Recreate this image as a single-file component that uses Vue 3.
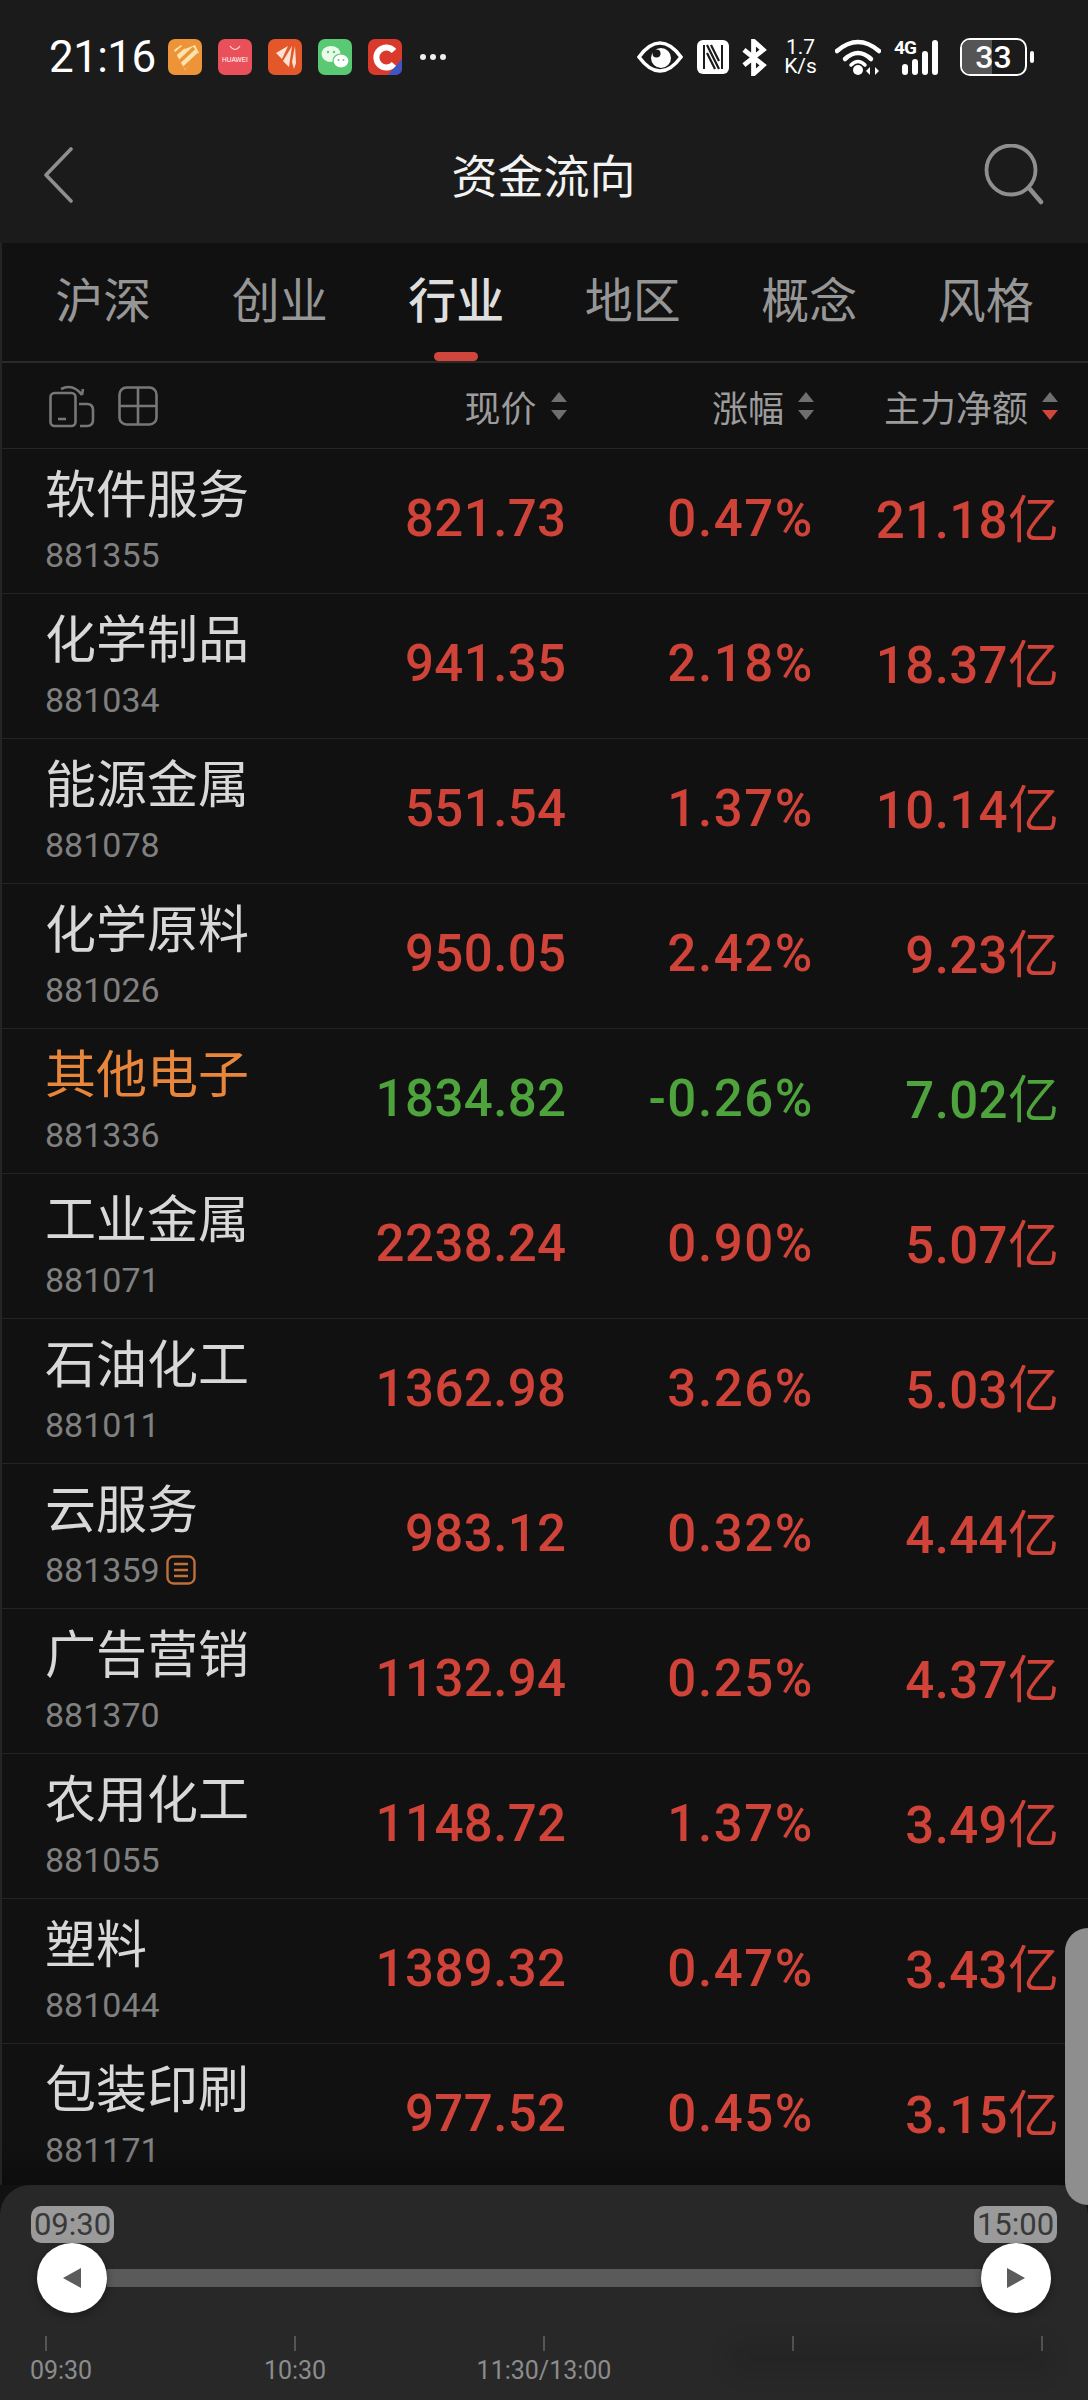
<script setup>
const tabs = ['沪深', '创业', '行业', '地区', '概念', '风格']
const rows = [
  { name: '软件服务', code: '881355', price: '821.73', pct: '0.47%', amt: '21.18' },
  { name: '化学制品', code: '881034', price: '941.35', pct: '2.18%', amt: '18.37' },
  { name: '能源金属', code: '881078', price: '551.54', pct: '1.37%', amt: '10.14' },
  { name: '化学原料', code: '881026', price: '950.05', pct: '2.42%', amt: '9.23' },
  { name: '其他电子', code: '881336', price: '1834.82', pct: '-0.26%', amt: '7.02', hot: true, down: true },
  { name: '工业金属', code: '881071', price: '2238.24', pct: '0.90%', amt: '5.07' },
  { name: '石油化工', code: '881011', price: '1362.98', pct: '3.26%', amt: '5.03' },
  { name: '云服务', code: '881359', price: '983.12', pct: '0.32%', amt: '4.44', note: true },
  { name: '广告营销', code: '881370', price: '1132.94', pct: '0.25%', amt: '4.37' },
  { name: '农用化工', code: '881055', price: '1148.72', pct: '1.37%', amt: '3.49' },
  { name: '塑料', code: '881044', price: '1389.32', pct: '0.47%', amt: '3.43' },
  { name: '包装印刷', code: '881171', price: '977.52', pct: '0.45%', amt: '3.15' }
]
const axis = ['09:30', '10:30', '11:30/13:00', '', '']
</script>

<template>
  <div class="app">
    <header class="top">
      <div class="status">
        <span class="time">21:16</span>
        <div class="apps">
          <svg class="app-icon" viewBox="0 0 34 36"><rect width="34" height="36" rx="7" fill="#ee9438"/><path d="M6 11 L13 6 L17 10 L27 6 L31 14 L17 31 Z" fill="#fbe7b0" opacity=".95"/><path d="M4 18 L20 4 M10 24 L26 9 M16 29 L31 15" stroke="#ee9438" stroke-width="3.5"/></svg>
          <svg class="app-icon" viewBox="0 0 34 36"><rect width="34" height="36" rx="7" fill="#e9505a"/><path d="M12 7 Q17 14 22 7" fill="none" stroke="#fbd5d5" stroke-width="1.2"/><text x="17" y="23" text-anchor="middle" class="hw">HUAWEI</text></svg>
          <svg class="app-icon" viewBox="0 0 34 36"><rect width="34" height="36" rx="7" fill="#e4572a"/><path d="M8 14 L20 7 L14 20 Z M15 22 L24 7 L21 28 Z M24 23 L27 7 L28 24 L26 30 Z" fill="#fbe3d3"/></svg>
          <svg class="app-icon" viewBox="0 0 34 36"><rect width="34" height="36" rx="7" fill="#59c973"/><ellipse cx="13" cy="15" rx="9.5" ry="8" fill="#eafbe9"/><ellipse cx="23" cy="22" rx="8" ry="7" fill="#fff" stroke="#59c973" stroke-width="1.2"/><circle cx="10" cy="13" r="1.2" fill="#59c973"/><circle cx="16" cy="13" r="1.2" fill="#59c973"/><circle cx="20.500" cy="21" r="1" fill="#59c973"/><circle cx="25.500" cy="21" r="1" fill="#59c973"/></svg>
          <svg class="app-icon" viewBox="0 0 34 36"><rect width="34" height="36" rx="7" fill="#d93a2b"/><path d="M26 12 A10 10 0 1 0 26 25" fill="none" stroke="#fff" stroke-width="6"/><path d="M34 20 V29 Q34 36 27 36 H20 Z" fill="#3f55c4"/></svg>
        </div>
        <span class="dots"><i></i><i></i><i></i></span>
        <div class="sys">
          <svg class="s-eye" viewBox="0 0 46 32"><path d="M2 16C10 5 18 2 23 2s13 3 21 14C36 27 28 30 23 30S10 27 2 16Z" fill="none" stroke="#fff" stroke-width="3.600"/><circle cx="24" cy="17" r="10" fill="#fff"/><circle cx="19.500" cy="12.500" r="4" fill="#1b1b1b"/></svg>
          <svg class="s-nfc" viewBox="0 0 32 34"><rect width="32" height="34" rx="6" fill="#fff"/><path d="M7 5 V29 M25 5 V29" stroke="#1b1b1b" stroke-width="2"/><path d="M10 5 L22 29 M10 13 L18 29 M14 5 L22 21" stroke="#1b1b1b" stroke-width="2.200"/></svg>
          <svg class="s-bt" viewBox="0 0 26 38"><path d="M2 11 L22 27 L12 36 V2 L22 11 L2 27" fill="none" stroke="#fff" stroke-width="5"/></svg>
          <div class="speed"><span>1.7</span><span>K/s</span></div>
          <svg class="s-wifi" viewBox="0 0 46 38"><path d="M2 13 Q23 -5 44 13" fill="none" stroke="#fff" stroke-width="4.500" stroke-linecap="round"/><path d="M10 21 Q23 9 36 21" fill="none" stroke="#fff" stroke-width="4.500" stroke-linecap="round"/><path d="M16 27 Q23 20 30 27" fill="none" stroke="#fff" stroke-width="3.500" stroke-linecap="round"/><circle cx="23" cy="32" r="5" fill="#fff"/><path d="M35 29 V37 L31 33 Z M40 29 V37 L44 33 Z" fill="#fff"/></svg>
          <div class="signal">
            <span class="g4">4G</span>
            <i class="b1"></i><i class="b2"></i><i class="b3"></i><i class="b4"></i>
          </div>
          <div class="battery"><div class="bat-body"><div class="bat-fill"></div><span>33</span></div><i class="bat-tip"></i></div>
        </div>
      </div>
      <div class="nav">
        <svg class="back" viewBox="0 0 30 56"><path d="M28 2 L3 28 L28 54" fill="none" stroke="#8f8f8f" stroke-width="3.600" stroke-linecap="round" stroke-linejoin="round"/></svg>
        <h1 class="title">资金流向</h1>
        <svg class="search" viewBox="0 0 60 62"><circle cx="27" cy="26" r="24.500" fill="none" stroke="#8f8f8f" stroke-width="3.800"/><path d="M45 44 L57 58" stroke="#8f8f8f" stroke-width="4.500" stroke-linecap="round"/></svg>
      </div>
    </header>

    <main class="main">
      <nav class="tabs">
        <div v-for="t in tabs" :key="t" class="tab" :class="{ on: t === '行业' }">{{ t }}</div>
      </nav>
      <div class="thead grid">
        <div class="th-icons">
          <svg class="i-rot" viewBox="0 0 46 44"><rect x="1.500" y="9" width="25" height="33" rx="4" fill="none" stroke="#777" stroke-width="2.600"/><path d="M9 35 H17" stroke="#777" stroke-width="2.600"/><path d="M30 20 H38 Q44 20 44 26 V36 Q44 42 38 42 H31" fill="none" stroke="#777" stroke-width="2.600"/><path d="M12 5 Q24 -1 33 11 M33 11 L34 5" fill="none" stroke="#777" stroke-width="2.600"/></svg>
          <svg class="i-grid" viewBox="0 0 40 40"><rect x="1.500" y="1.500" width="37" height="37" rx="7" fill="none" stroke="#777" stroke-width="2.600"/><path d="M20 2 V38 M2 20 H38" stroke="#777" stroke-width="2.600"/></svg>
        </div>
        <div class="th">现价<span class="sort"><i class="up"></i><i class="dn"></i></span></div>
        <div class="th">涨幅<span class="sort"><i class="up"></i><i class="dn"></i></span></div>
        <div class="th last">主力净额<span class="sort"><i class="up"></i><i class="dn active"></i></span></div>
      </div>
      <div v-for="r in rows" :key="r.code" class="row grid" :class="{ down: r.down }">
        <div class="stock">
          <div class="name" :class="{ hot: r.hot }">{{ r.name }}</div>
          <div class="code">{{ r.code }}
            <svg v-if="r.note" class="note" viewBox="0 0 30 30"><rect x="1.500" y="1.500" width="27" height="27" rx="6" fill="none" stroke="#bf6f3a" stroke-width="2.400"/><path d="M8 9 H22 M8 15 H22 M8 21 H22" stroke="#bf6f3a" stroke-width="2.400"/></svg>
          </div>
        </div>
        <div class="val">{{ r.price }}</div>
        <div class="val pct">{{ r.pct }}</div>
        <div class="val amt">{{ r.amt }}<span class="yi">亿</span></div>
      </div>
      <div class="fade"></div>
    </main>

    <section class="panel">
      <div class="badges"><span class="badge">09:30</span><span class="badge">15:00</span></div>
      <div class="slider">
        <div class="knob"><svg class="tri" viewBox="0 0 18 20"><path d="M0 10 L18 0 V20 Z" fill="#5c5c5c"/></svg></div>
        <div class="track"></div>
        <div class="knob"><svg class="tri" viewBox="0 0 18 20"><path d="M18 10 L0 0 V20 Z" fill="#5c5c5c"/></svg></div>
      </div>
      <div class="axis">
        <div v-for="(a, i) in axis" :key="i" class="tick" :class="'t' + i">
          <i></i>
          <span>{{ a }}</span>
        </div>
      </div>
      <div class="smudge"></div>
    </section>

    <div class="handle"></div>
  </div>
</template>

<style scoped>
* { box-sizing: border-box; }
i { display: block; }
.app {
  position: relative;
  width: 1088px;
  height: 2400px;
  overflow: hidden;
  display: flex;
  flex-direction: column;
  background: #111;
  font-family: "Noto Sans CJK SC", "Noto Sans", sans-serif;
}
.top { background: #1b1b1b; height: 243px; flex: none; }
.status {
  height: 114px;
  display: flex;
  align-items: center;
  padding: 0 54px 0 49px;
  color: #fff;
}
.time {
  font: 400 44px/1 Roboto, sans-serif;
  letter-spacing: -.6px;
  width: 119px;
  flex: none;
}
.apps { display: flex; gap: 16px; }
.app-icon { width: 34px; height: 36px; display: block; }
.hw { font: 500 6.500px "Liberation Sans", sans-serif; fill: #fff; }
.dots { display: flex; gap: 4px; margin-left: 18px; }
.dots i { width: 6px; height: 6px; border-radius: 50%; background: #eee; }
.sys { margin-left: auto; display: flex; align-items: center; }
.s-eye { width: 46px; height: 32px; margin-right: 14px; }
.s-nfc { width: 32px; height: 34px; margin-right: 13px; }
.s-bt { width: 25px; height: 37px; margin-right: 16px; }
.speed {
  display: flex;
  flex-direction: column;
  align-items: center;
  width: 35px;
  font: 400 21px/19px Roboto, sans-serif;
  margin-right: 17px;
}
.s-wifi { width: 46px; height: 38px; margin-right: 13px; }
.signal { display: flex; align-items: flex-end; gap: 4px; position: relative; width: 51px; height: 36px; padding-left: 8px; margin-right: 15px; }
.signal i { width: 6px; background: #fff; border-radius: 3px; }
.b1 { height: 11px; }
.b2 { height: 16px; }
.b3 { height: 24px; }
.b4 { height: 35px; }
.g4 { position: absolute; left: 0; top: -1px; font: 700 19px/1 Roboto, sans-serif; letter-spacing: -1px; color: #fff; }
.battery { display: flex; align-items: center; gap: 3px; }
.bat-body {
  position: relative;
  width: 67px;
  height: 38px;
  border: 2.500px solid #fff;
  border-radius: 10px;
  display: flex;
  align-items: center;
  justify-content: center;
  overflow: hidden;
}
.bat-fill { position: absolute; left: 0; top: 0; bottom: 0; width: 30px; background: #555; }
.bat-body span { position: relative; font: 500 32px/1 Roboto, sans-serif; }
.bat-tip { width: 4px; height: 12px; border-radius: 2px; background: #fff; }
.nav {
  height: 122px;
  display: grid;
  grid-template-columns: 1fr auto 1fr;
  align-items: center;
  padding: 0 44px 0 43px;
}
.back { width: 30px; height: 56px; }
.search { width: 60px; height: 62px; justify-self: end; }
.title {
  margin: 0 0 5px;
  font-size: 46px;
  font-weight: 400;
  line-height: 1;
  color: #f2f2f2;
}
.main { position: relative; flex: 1; min-height: 0; overflow: hidden; border-left: 2px solid #242424; margin-top: 0; }
.tabs {
  display: flex;
  height: 120px;
  margin-left: -2px;
  padding: 0 14px 10px 15px;
  border-bottom: 2px solid #2a2a2a;
}
.tab {
  flex: 1;
  display: flex;
  align-items: center;
  justify-content: center;
  font-size: 48px;
  color: #969696;
  position: relative;
}
.tab.on { color: #dedede; font-weight: 500; }
.tab.on::after {
  content: "";
  position: absolute;
  left: 66px;
  bottom: -10px;
  width: 44px;
  height: 9px;
  border-radius: 5px;
  background: #d0453c;
}
.grid {
  display: grid;
  grid-template-columns: 274px 247.5px 247.5px 245px;
  padding-left: 43px;
  align-items: center;
}
.thead { height: 86px; border-bottom: 1px solid #252525; }
.th-icons { display: flex; align-items: center; gap: 23px; padding-left: 4px; }
.i-rot { width: 46px; height: 44px; }
.i-grid { width: 40px; height: 40px; }
.th {
  display: flex;
  justify-content: flex-end;
  align-items: center;
  gap: 14px;
  font-size: 36px;
  line-height: 1;
  color: #9c9c9c;
}
.th.last { margin-right: 1px; }
.sort { display: flex; flex-direction: column; gap: 8px; }
.sort i { width: 0; height: 0; border-left: 8px solid transparent; border-right: 8px solid transparent; }
.sort .up { border-bottom: 10px solid #6f6f6f; }
.sort .dn { border-top: 10px solid #6f6f6f; }
.sort .dn.active { border-top-color: #d0453c; }
.row { height: 145px; border-bottom: 1px solid #242424; color: #cf4339; }
.row.down { color: #4ea33d; }
.stock { display: flex; flex-direction: column; gap: 17px; padding-bottom: 10px; }
.name { font-size: 51px; line-height: 60px; color: #d8d8d8; white-space: nowrap; }
.name.hot { color: #e8863c; }
.code {
  display: flex;
  align-items: center;
  gap: 6px;
  font: 400 34px/34px Roboto, sans-serif;
  color: #808080;
}
.note { width: 30px; height: 30px; flex: none; }
.val {
  text-align: right;
  font: 500 51px/1 Roboto, sans-serif;
  letter-spacing: .4px;
  padding-bottom: 6px;
  white-space: nowrap;
}
.pct { letter-spacing: 1.6px; }
.yi { font-family: "Noto Sans CJK SC", sans-serif; font-weight: 400; letter-spacing: 0; }
.fade {
  position: absolute;
  left: 0;
  right: 0;
  bottom: 0;
  height: 40px;
  background: linear-gradient(rgba(0,0,0,0), rgba(0,0,0,.25));
}
.panel {
  position: relative;
  flex: none;
  height: 215px;
  background: #282828;
  border-radius: 30px 30px 0 0;
  padding-top: 21px;
}
.badges { display: flex; justify-content: space-between; padding: 0 31px; }
.badge {
  width: 83px;
  height: 37px;
  border-radius: 10px;
  background: #9a9a9a;
  color: #383838;
  font: 400 31px/37px Roboto, sans-serif;
  text-align: center;
}
.slider { display: flex; align-items: center; padding: 0 37px; height: 70px; }
.knob {
  position: relative;
  z-index: 1;
  flex: none;
  width: 70px;
  height: 70px;
  border-radius: 50%;
  background: #fff;
  box-shadow: 0 3px 8px rgba(0,0,0,.35);
  display: flex;
  align-items: center;
  justify-content: center;
}
.tri { width: 18px; height: 20px; }
.track { flex: 1; height: 18px; background: #5a5a5a; }
.axis { display: flex; justify-content: space-between; padding: 23px 45px 0; }
.tick { width: 2px; display: flex; flex-direction: column; align-items: center; }
.tick i { flex: none; width: 1.500px; height: 15px; background: #555; }
.tick span {
  flex: none;
  margin-top: 7px;
  font: 400 25px/25px Roboto, sans-serif;
  color: #8c8c8c;
  white-space: nowrap;
}
.t0 span { margin-left: 30px; }
.smudge {
  position: absolute;
  left: 730px;
  top: 158px;
  width: 320px;
  height: 30px;
  background: rgba(0,0,0,.09);
  filter: blur(10px);
}
.handle {
  position: absolute;
  right: 0;
  top: 1928px;
  width: 23px;
  height: 277px;
  background: #8e8e8e;
  border-radius: 26px 0 0 26px;
}
</style>
